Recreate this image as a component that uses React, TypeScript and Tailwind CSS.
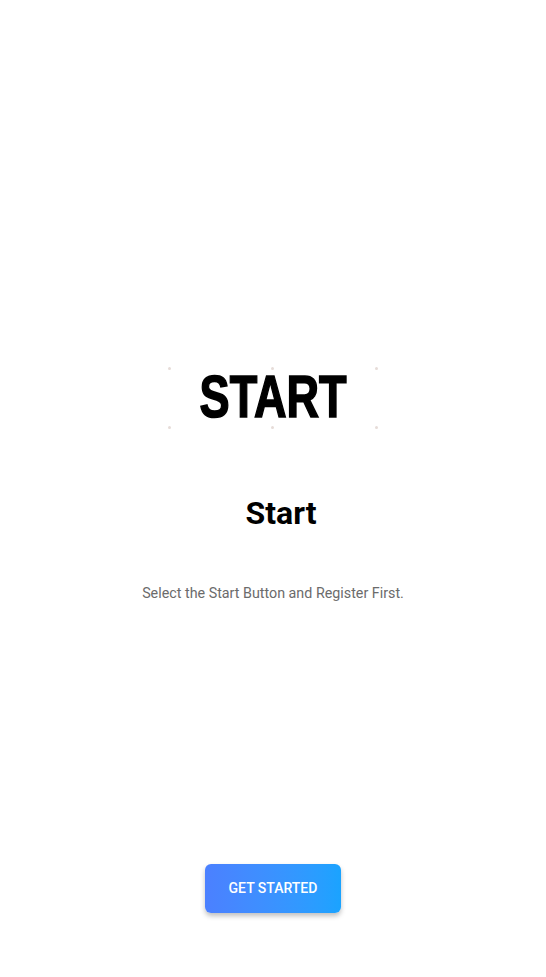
import React from 'react';

const Dot: React.FC<{ className: string }> = ({ className }) => (
  <span className={`absolute w-[3px] h-[3px] rounded-full bg-[#e6dcd8] ${className}`} />
);

const StartLogo: React.FC = () => {
  return (
    <div className="relative w-[210px] h-[62px] flex items-center justify-center">
      <Dot className="left-0 top-0" />
      <Dot className="left-[103px] top-0" />
      <Dot className="right-0 top-0" />
      <Dot className="left-0 bottom-0" />
      <Dot className="left-[103px] bottom-0" />
      <Dot className="right-0 bottom-0" />
      <span
        className="text-[59px] leading-none font-bold text-black scale-x-[0.765] pb-[2px] [-webkit-text-stroke:1.6px_#000]"
        style={{ fontFamily: '"Liberation Sans", Arial, sans-serif' }}
      >
        START
      </span>
    </div>
  );
};

const App: React.FC = () => {
  return (
    <div
      className="w-full h-[977px] bg-white flex flex-col items-center"
      style={{ fontFamily: 'Roboto, "Liberation Sans", sans-serif' }}
    >
      <div className="pt-[367px]">
        <StartLogo />
      </div>
      <h1 className="mt-[64px] pl-[16px] text-[32px] leading-[40px] font-bold text-black">Start</h1>
      <p className="mt-[50px] text-[14.3px] leading-5 text-[#6b6b6b]">
        Select the Start Button and Register First.
      </p>
      <div className="flex-1" />
      <button className="mb-[64px] w-[136px] h-[49px] rounded-[6px] bg-gradient-to-r from-[#4b80ff] to-[#1aa3ff] text-white text-[14px] font-medium uppercase shadow-[0_3px_5px_rgba(0,0,0,0.25)]">
        Get Started
      </button>
    </div>
  );
};

export default App;
